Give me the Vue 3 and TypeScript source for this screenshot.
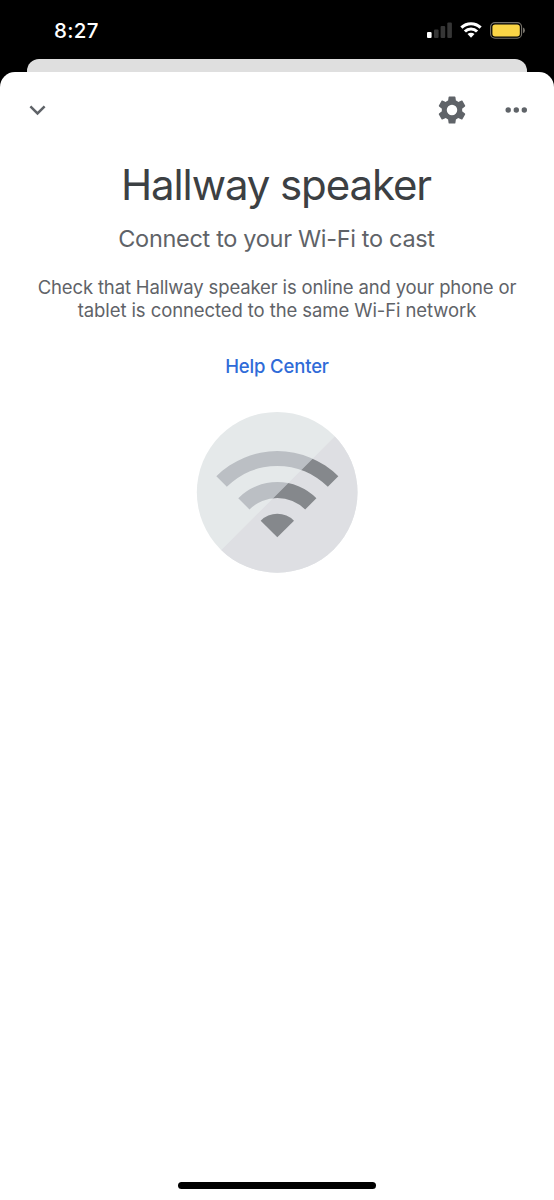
<script setup lang="ts">
const deviceName: string = 'Hallway speaker'
const time: string = '8:27'
const bars: { x: number; h: number; on: boolean }[] = [
  { x: 0, h: 6, on: true },
  { x: 7, h: 8.5, on: false },
  { x: 13.6, h: 12, on: false },
  { x: 20.3, h: 15.5, on: false },
]
</script>

<template>
  <div class="phone">
    <header class="status">
      <span class="time">{{ time }}</span>
      <div class="indicators">
        <svg class="signal" width="25" height="16" viewBox="0 0 25 16">
          <rect
            v-for="b in bars"
            :key="b.x"
            :x="b.x"
            :y="16 - b.h"
            width="4.6"
            :height="b.h"
            rx="1.1"
            :fill="b.on ? '#fff' : '#363636'"
          />
        </svg>
        <svg class="wifi" width="22" height="16" viewBox="0 0 22 16">
          <g fill="none" stroke="#fff" stroke-width="3.1">
            <path d="M1.4 5.7A13.6 13.6 0 0 1 20.6 5.7" />
            <path d="M4.9 9.5A8.7 8.7 0 0 1 17.1 9.5" />
          </g>
          <path d="M7.5 12.1A5 5 0 0 1 14.5 12.1L11 15.7Z" fill="#fff" />
        </svg>
        <svg class="battery" width="35" height="17" viewBox="0 0 35 17">
          <rect x="0.6" y="0.6" width="31" height="15.6" rx="4.4" fill="none" stroke="#77736b" stroke-width="1.1" />
          <rect x="2.4" y="2.4" width="27.4" height="12" rx="2.7" fill="#fbd546" />
          <path d="M33 5.6A3 3 0 0 1 33 11.2Z" fill="#77736b" />
        </svg>
      </div>
    </header>
    <div class="behind"></div>
    <main class="sheet">
      <nav class="toolbar">
        <button class="collapse" aria-label="Collapse">
          <svg width="17" height="11" viewBox="0 0 17 11">
            <path d="M1.4 1.4L8.5 8.5L15.6 1.4" fill="none" stroke="#5f6368" stroke-width="2.5" />
          </svg>
        </button>
        <div class="actions">
          <button aria-label="Settings">
            <svg class="gear" width="34" height="34" viewBox="0 0 24 24">
              <path
                fill="#5f6368"
                d="M19.14 12.94c.04-.3.06-.61.06-.94 0-.32-.02-.64-.07-.94l2.03-1.58c.18-.14.23-.41.12-.61l-1.92-3.32c-.12-.22-.37-.29-.59-.22l-2.39.96c-.5-.38-1.03-.7-1.62-.94l-.36-2.54c-.04-.24-.24-.41-.48-.41h-3.84c-.24 0-.43.17-.47.41l-.36 2.54c-.59.24-1.13.57-1.62.94l-2.39-.96c-.22-.08-.47 0-.59.22L2.74 8.87c-.12.21-.08.47.12.61l2.03 1.58c-.05.3-.09.63-.09.94s.02.64.07.94l-2.03 1.58c-.18.14-.23.41-.12.61l1.92 3.32c.12.22.37.29.59.22l2.39-.96c.5.38 1.03.7 1.62.94l.36 2.54c.05.24.24.41.48.41h3.84c.24 0 .44-.17.47-.41l.36-2.54c.59-.24 1.13-.56 1.62-.94l2.39.96c.22.08.47 0 .59-.22l1.92-3.32c.12-.22.07-.47-.12-.61l-2.01-1.58zM12 15.7A3.7 3.7 0 1 1 12 8.3A3.7 3.7 0 0 1 12 15.7z"
              />
            </svg>
          </button>
          <button aria-label="More">
            <svg width="22" height="6" viewBox="0 0 22 6" fill="#5f6368">
              <circle cx="3.2" cy="3" r="2.7" />
              <circle cx="11.3" cy="3" r="2.7" />
              <circle cx="19.3" cy="3" r="2.7" />
            </svg>
          </button>
        </div>
      </nav>
      <h1>{{ deviceName }}</h1>
      <h2>Connect to your Wi-Fi to cast</h2>
      <p>
        <span class="l1">Check that {{ deviceName }} is online and your phone or</span><br />
        <span class="l2">tablet is connected to the same Wi-Fi network</span>
      </p>
      <a class="help">Help Center</a>
      <svg class="art" width="162" height="162" viewBox="27 27 486 486">
        <defs>
          <clipPath id="disc"><circle cx="270.5" cy="271" r="241" /></clipPath>
          <clipPath id="lower"><path d="M547 0V547H0Z" /></clipPath>
          <g id="waves">
            <path d="M88 223A259 259 0 0 1 454 223L422.5 254.5A214 214 0 0 0 119.5 254.5Z" />
            <path d="M153.8 288.6A166 166 0 0 1 388.2 288.6L354.5 322.5A118 118 0 0 0 187.5 322.5Z" />
            <path d="M221 356A71 71 0 0 1 321 356L271 406Z" />
          </g>
        </defs>
        <g clip-path="url(#disc)">
          <rect x="27" y="27" width="486" height="486" fill="#e5e9ea" />
          <use href="#waves" fill="#bbbfc4" />
          <g clip-path="url(#lower)">
            <rect x="0" y="0" width="547" height="547" fill="#dedfe3" />
            <use href="#waves" fill="#85888c" />
          </g>
        </g>
      </svg>
      <div class="home"></div>
    </main>
  </div>
</template>

<style>
body {
  margin: 0;
  background: #000;
}
</style>

<style scoped>
.phone {
  width: 554px;
  height: 1200px;
  background: #000;
  display: flex;
  flex-direction: column;
  overflow: hidden;
  font-family: Inter, 'Liberation Sans', sans-serif;
}
.status {
  height: 59px;
  flex: none;
  display: flex;
  justify-content: space-between;
  box-sizing: border-box;
  padding: 0 29px 0 54px;
  color: #fff;
}
.time {
  font-size: 20.5px;
  font-weight: 500;
  letter-spacing: 0.3px;
  line-height: 25px;
  padding-top: 18px;
}
.indicators {
  display: flex;
  align-items: flex-start;
}
.signal {
  margin-top: 22px;
}
.wifi {
  margin: 22px 0 0 8px;
}
.battery {
  margin: 22px 0 0 8px;
}
.behind {
  height: 14px;
  flex: none;
  margin: 0 27px;
  border-radius: 12px 12px 0 0;
  background: #dfdfdf;
}
.sheet {
  flex: 1;
  margin-top: -1px;
  background: #fff;
  border-radius: 15px 15px 0 0;
  display: flex;
  flex-direction: column;
  align-items: center;
  text-align: center;
  color: #5f6368;
}
.toolbar {
  width: 100%;
  height: 76px;
  flex: none;
  box-sizing: border-box;
  padding: 0 27px 0 29px;
  display: flex;
  justify-content: space-between;
  align-items: center;
}
button {
  border: 0;
  padding: 0;
  background: none;
  display: flex;
}
.actions {
  display: flex;
  align-items: center;
  gap: 36px;
}
h1 {
  margin: 11px 2px 0 0;
  font-size: 42px;
  line-height: 52px;
  font-weight: 400;
  letter-spacing: -1.1px;
  color: #3c4043;
  white-space: nowrap;
}
h2 {
  margin: 13px 1px 0 0;
  font-size: 23.5px;
  line-height: 30px;
  font-weight: 400;
  letter-spacing: -0.32px;
  white-space: nowrap;
}
p {
  margin: 22px 0 0;
  font-size: 18.5px;
  line-height: 22.5px;
  white-space: nowrap;
}
.l1 {
  letter-spacing: -0.15px;
}
.l2 {
  letter-spacing: -0.09px;
}
.help {
  margin-top: 34px;
  font-size: 18.5px;
  line-height: 23px;
  font-weight: 500;
  letter-spacing: -0.15px;
  color: #2f6bd8;
}
.art {
  flex: none;
  margin-top: 33px;
}
.home {
  width: 198px;
  height: 7px;
  flex: none;
  border-radius: 4px;
  background: #000;
  margin: auto 0 11px;
}
</style>
